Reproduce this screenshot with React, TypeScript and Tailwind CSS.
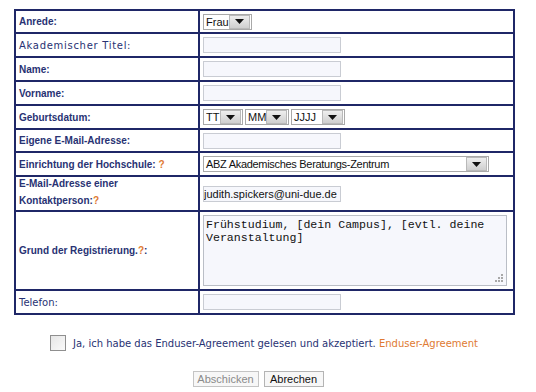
import React from "react";

const NAVY = "text-[#283273]";
const ARIAL = { fontFamily: "'Liberation Sans', Arial, sans-serif" };
const DEJAVU = { fontFamily: "'DejaVu Sans', Verdana, sans-serif" };

function Arrow() {
  return (
    <span className="flex h-[14px] w-[21px] items-center justify-center border border-[#b9b9b9] bg-[linear-gradient(#eeeeee,#cfcfcf)]">
      <svg width="9" height="5" viewBox="0 0 9 5">
        <polygon points="0,0 9,0 4.5,5" fill="#111" />
      </svg>
    </span>
  );
}

function Select({ label, w, tight }: { label: string; w: string; tight?: boolean }) {
  return (
    <span
      className={`inline-flex h-[16px] items-center justify-between border border-[#a9a9a9] bg-white pr-[1px] ${w}`}
    >
      <span
        className={`pl-[2px] text-[11px] leading-[14px] text-[#111] ${tight ? "tracking-[-0.3px]" : ""}`}
        style={ARIAL}
      >
        {label}
      </span>
      <Arrow />
    </span>
  );
}

function TextInput({ value }: { value?: string }) {
  return (
    <span
      className="block h-[16px] w-[138px] overflow-hidden whitespace-nowrap border border-[#c9ccd3] bg-[#f6f7fc] text-[11px] leading-[14px] text-[#111]"
      style={ARIAL}
    >
      {value}
    </span>
  );
}

function Q() {
  return <span className="text-[#e07a32]">?</span>;
}

function Row({
  h,
  label,
  plain,
  first,
  children,
}: {
  h: string;
  label: React.ReactNode;
  plain?: string;
  first?: boolean;
  children: React.ReactNode;
}) {
  return (
    <div className={`grid grid-cols-[184px_311px] ${first ? "" : "border-t-2 border-[#1f2767]"} ${h}`}>
      <div
        className={`flex items-center border-r-2 border-[#1f2767] pl-[3px] leading-[17px] ${NAVY} ${
          plain ? `text-[10px] font-normal ${plain}` : "text-[10px] font-bold"
        }`}
        style={plain ? DEJAVU : ARIAL}
      >
        <div>{label}</div>
      </div>
      <div className="flex items-center pl-[3px]">{children}</div>
    </div>
  );
}

export default function App() {
  return (
    <div className="h-[392px] w-[536px] bg-white pt-[9px]" style={DEJAVU}>
      <div className="ml-[14px] w-[501px] border-2 border-[#1f2767]">
        <Row h="h-[21px]" label="Anrede:" first>
          <Select label="Frau" w="w-[49px]" />
        </Row>
        <Row h="h-[24px]" label="Akademischer Titel:" plain="tracking-[0.7px]">
          <TextInput />
        </Row>
        <Row h="h-[24px]" label="Name:">
          <TextInput />
        </Row>
        <Row h="h-[24px]" label="Vorname:">
          <TextInput />
        </Row>
        <Row h="h-[24px]" label="Geburtsdatum:">
          <div className="flex gap-[2px]">
            <Select label="TT" w="w-[40px]" />
            <Select label="MM" w="w-[44px]" />
            <Select label="JJJJ" w="w-[54px]" />
          </div>
        </Row>
        <Row h="h-[23px]" label="Eigene E-Mail-Adresse:">
          <TextInput />
        </Row>
        <Row
          h="h-[24px]"
          label={
            <>
              Einrichtung der Hochschule: <Q />
            </>
          }
        >
          <Select label="ABZ Akademisches Beratungs-Zentrum" w="w-[286px]" tight />
        </Row>
        <Row
          h="h-[35px]"
          label={
            <div className="-mt-[3px]">
              E-Mail-Adresse einer
              <br />
              Kontaktperson:
              <Q />
            </div>
          }
        >
          <TextInput value="judith.spickers@uni-due.de" />
        </Row>
        <Row
          h="h-[79px]"
          label={
            <>
              Grund der Registrierung.
              <Q />:
            </>
          }
        >
          <div className="relative h-[71px] w-[304px] border border-[#babec6] bg-[#f6f7fc] px-[2px] pt-[2px]">
            <div
              className="text-[11.6px] leading-[13px] text-[#111]"
              style={{ fontFamily: "'Liberation Mono', 'Courier New', monospace" }}
            >
              Frühstudium, [dein Campus], [evtl. deine
              <br />
              Veranstaltung]
            </div>
            <svg className="absolute bottom-[2px] right-[2px]" width="10" height="10" viewBox="0 0 10 10">
              <rect x="7" y="1" width="2" height="2" fill="#a8a8a8" />
              <rect x="4" y="4" width="2" height="2" fill="#a8a8a8" />
              <rect x="7" y="4" width="2" height="2" fill="#a8a8a8" />
              <rect x="1" y="7" width="2" height="2" fill="#a8a8a8" />
              <rect x="4" y="7" width="2" height="2" fill="#a8a8a8" />
              <rect x="7" y="7" width="2" height="2" fill="#a8a8a8" />
            </svg>
          </div>
        </Row>
        <Row h="h-[24px]" label="Telefon:" plain="tracking-[0px]">
          <TextInput />
        </Row>
      </div>

      <div className="ml-[14px] mt-[20px] flex w-[501px] items-center justify-center gap-[7px] pr-[1px]">
        <span className="h-[16px] w-[16px] border border-[#8f8f8f] bg-[linear-gradient(135deg,#e6e6e6,#fafafa)]" />
        <span className={`text-[10px] ${NAVY}`}>
          Ja, ich habe das Enduser-Agreement gelesen und akzeptiert.{" "}
          <span className="text-[#e07a32]">Enduser-Agreement</span>
        </span>
      </div>

      <div className="mt-[20px] flex justify-center gap-[5px] pr-[20px] text-[11px] leading-[13px]" style={ARIAL}>
        <span className="flex h-[16px] w-[66px] items-center justify-center border border-[#c4c4c4] bg-[#f7f7f7] text-[#8a8a8a]">
          Abschicken
        </span>
        <span className="flex h-[16px] w-[60px] items-center justify-center border border-[#b4b4b4] bg-[#f7f7f7] text-[#111]">
          Abrechen
        </span>
      </div>
    </div>
  );
}
